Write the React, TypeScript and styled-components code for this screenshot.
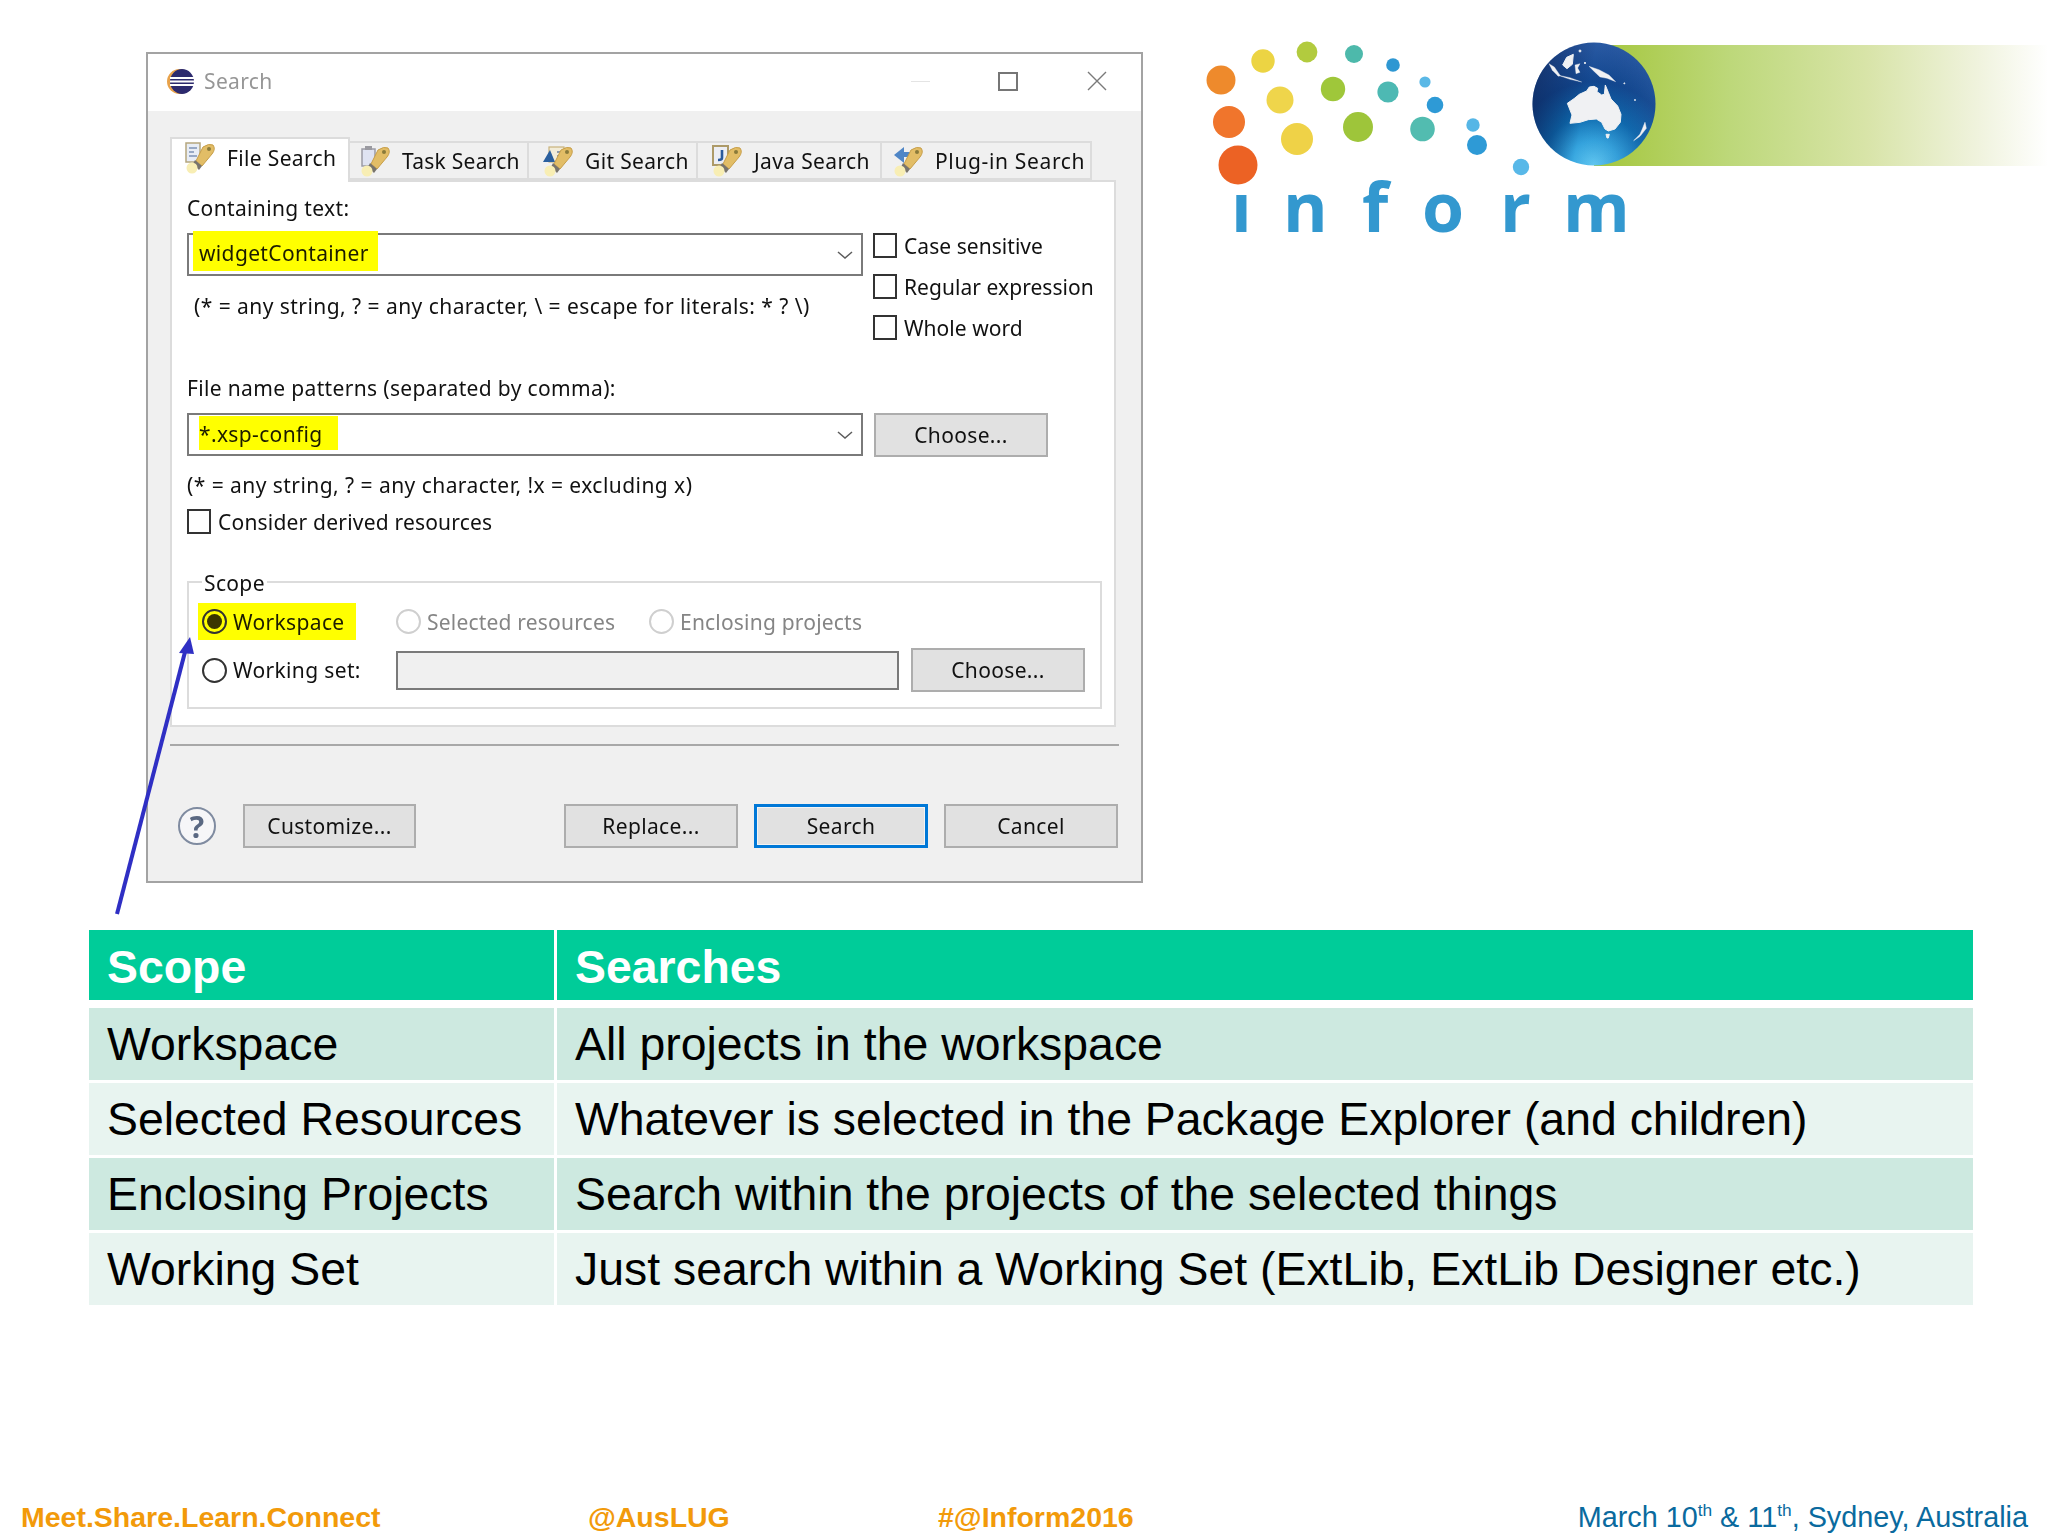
import React from 'react'
import styled, { createGlobalStyle } from 'styled-components'

const GlobalStyle = createGlobalStyle`
	html, body {
		margin: 0;
		padding: 0;
		background: #fff;
	}
	* {
		box-sizing: border-box;
	}
`

type TabKind = 'file' | 'task' | 'git' | 'java' | 'plugin'

const tabs: { label: string; kind: TabKind; width: number; pad: number; spacing: number }[] = [
	{ label: 'File Search', kind: 'file', width: 180, pad: 12, spacing: 0.35 },
	{ label: 'Task Search', kind: 'task', width: 179, pad: 9, spacing: 0.25 },
	{ label: 'Git Search', kind: 'git', width: 169, pad: 13, spacing: 0.35 },
	{ label: 'Java Search', kind: 'java', width: 184, pad: 13, spacing: 0.35 },
	{ label: 'Plug-in Search', kind: 'plugin', width: 210, pad: 10, spacing: 0.65 },
]

const dots = [
	[1221, 80, 14.5, '#ee8a2c'],
	[1263, 61, 11.7, '#ecd443'],
	[1307, 52, 10.4, '#b2cb3e'],
	[1354, 54, 9, '#4db9ab'],
	[1393, 65, 6.8, '#2e97d2'],
	[1425, 82, 5.6, '#5ab8e6'],
	[1229, 122, 16, '#f0752c'],
	[1280, 100, 13.5, '#efd54b'],
	[1333, 89, 12.2, '#9fc73a'],
	[1388, 92, 10.6, '#4db9b3'],
	[1435, 105, 8.3, '#2e9ad6'],
	[1238, 165, 19.5, '#ec6224'],
	[1297, 139, 16, '#efd247'],
	[1358, 127, 15, '#9ec53a'],
	[1422.5, 129, 12.3, '#52bcb0'],
	[1473, 125, 6.7, '#56b6e6'],
	[1477, 145, 10, '#2e9ad6'],
	[1521, 167, 8.2, '#58b8e8'],
] as const

const rows = [
	['Workspace', 'All projects in the workspace'],
	['Selected Resources', 'Whatever is selected in the Package Explorer (and children)'],
	['Enclosing Projects', 'Search within the projects of the selected things'],
	['Working Set', 'Just search within a Working Set (ExtLib, ExtLib Designer etc.)'],
]

const TabIcon = ({ kind }: { kind: TabKind }) => (
	<TabSvg viewBox="0 0 32 32">
		{kind === 'file' && (
			<>
				<rect x="2" y="1" width="14" height="19" fill="#e8edf5" stroke="#b5a67e" strokeWidth="1.5" />
				<path d="M5 6h8M5 10h5M5 14h8" stroke="#7d93b5" strokeWidth="1.6" />
			</>
		)}
		{kind === 'task' && (
			<>
				<rect x="3" y="4" width="13" height="17" fill="#dfe3f2" stroke="#9a9aa4" strokeWidth="1.5" />
				<rect x="6" y="1" width="7" height="4" fill="#9a9aa0" />
			</>
		)}
		{kind === 'git' && (
			<>
				<rect x="7" y="2" width="15" height="15" fill="#f2ecd8" stroke="#c9b37c" strokeWidth="1.2" />
				<path d="M1 17 L8 5 L13 17 Z" fill="#2a5f9e" />
				<path d="M15 7h5M15 11h5" stroke="#6d7f9a" strokeWidth="1.5" />
			</>
		)}
		{kind === 'java' && (
			<>
				<rect x="2" y="1" width="15" height="19" fill="#eceef4" stroke="#ad9a68" strokeWidth="2" />
				<path d="M11 5 V13 Q11 15 7 15" fill="none" stroke="#2a5a9c" strokeWidth="2.6" />
			</>
		)}
		{kind === 'plugin' && (
			<path d="M2 10 L12 2 V7 H18 V12 H12 V18 Z" fill="#4f86c6" />
		)}
		<path d="M19 5 Q25 1 29 3 Q32 7 28 12 L18 24 L12 19 Z" fill="#e2bd66" stroke="#c79e48" strokeWidth="1" />
		<circle cx="25" cy="7" r="2" fill="#8a7a3a" />
		<path d="M11 18 L18 24 L15 28 L9 22 Z" fill="#77736c" />
		<circle cx="8" cy="26" r="5.5" fill="#f8eeb4" />
	</TabSvg>
)

const EclipseIcon = () => (
	<EclipseSvg viewBox="0 0 27 25">
		<ellipse cx="12.5" cy="12.5" rx="12.5" ry="12.5" fill="#e8a24a" />
		<ellipse cx="15" cy="12.5" rx="12" ry="12.5" fill="#2c2a6e" />
		<path d="M3 9h24M3 12.5h24M3 16h24" stroke="#fff" strokeWidth="2" />
	</EclipseSvg>
)

const Chevron = () => (
	<ChevronSvg viewBox="0 0 16 8">
		<path d="M1 1 L8 7 L15 1" fill="none" stroke="#5c5c5c" strokeWidth="1.5" />
	</ChevronSvg>
)

const Logo = () => (
	<LogoSvg viewBox="1178 20 870 230">
		<defs>
			<linearGradient id="trail" x1="0" x2="1" y1="0" y2="0">
				<stop offset="0" stopColor="#a4c63c" />
				<stop offset="0.3" stopColor="#bdd87a" />
				<stop offset="0.6" stopColor="#d8e4a8" />
				<stop offset="0.85" stopColor="#f0f3de" />
				<stop offset="1" stopColor="#ffffff" />
			</linearGradient>
			<radialGradient id="ocean" cx="0.5" cy="1" r="1">
				<stop offset="0" stopColor="#62caf4" />
				<stop offset="0.2" stopColor="#35a4de" />
				<stop offset="0.42" stopColor="#0d68ad" />
				<stop offset="0.68" stopColor="#12478f" />
				<stop offset="1" stopColor="#2a5aa4" />
			</radialGradient>
			<linearGradient id="shade" x1="0" x2="1" y1="0.3" y2="0.5">
				<stop offset="0" stopColor="#0a1f50" stopOpacity="0.6" />
				<stop offset="0.45" stopColor="#0a1f50" stopOpacity="0" />
				<stop offset="1" stopColor="#5a84c4" stopOpacity="0.1" />
			</linearGradient>
		</defs>
		<rect x="1594" y="45" width="454" height="121" fill="url(#trail)" />
		{dots.map(([cx, cy, r, fill]) => (
			<circle key={`${cx}-${cy}`} cx={cx} cy={cy} r={r} fill={fill} />
		))}
		<circle cx="1594" cy="104" r="61.5" fill="url(#ocean)" />
		<circle cx="1594" cy="104" r="61.5" fill="url(#shade)" />
		<g
			transform="translate(1525 35) scale(0.3333)"
			fill="#f0f1f3"
			stroke="#f0f1f3"
			strokeWidth="3"
			strokeLinejoin="round"
		>
			<path d="M127 205 Q150 190 163 178 L185 168 L193 156 L207 154 L218 160 L216 170 L230 180 L238 178 L241 150 L250 172 L258 192 L278 213 L288 238 L286 262 L270 282 L250 288 L240 282 L230 262 L214 252 L190 254 L165 262 L135 265 L141 240 Z" />
			<path d="M243 298 L253 298 L250 309 L246 309 Z" />
			<path d="M326 317 L345 298 L352 282 L360 262 L364 280 L345 304 Z" strokeWidth="1.5" />
			<path d="M113 90 L125 67 L145 58 L142 88 L126 101 Z" />
			<path d="M72 86 L88 96 L106 122 L100 124 L82 106 Z" strokeWidth="1" />
			<path d="M97 120 L135 128 L170 141 L135 133 Z" strokeWidth="1" />
			<path d="M150 90 L165 86 L158 99 L165 112 L153 116 Z" strokeWidth="1" />
			<path d="M192 94 L222 104 L252 120 L272 140 L246 130 L225 126 L206 108 Z" strokeWidth="1" />
			<circle cx="165" cy="48" r="3" />
			<circle cx="180" cy="84" r="2" />
			<circle cx="298" cy="145" r="1.5" />
			<circle cx="330" cy="195" r="1.5" />
		</g>
		<LogoWord x="1231 1283 1362 1422 1500 1563" y="232">
			ınform
		</LogoWord>
	</LogoSvg>
)

const App = () => (
	<Page>
		<GlobalStyle />
		<TopRow>
			<Dialog>
				<TitleBar>
					<EclipseIcon />
					<TitleText>Search</TitleText>
					<WindowControls>
						<MinimizeMark />
						<MaximizeMark />
						<svg width="20" height="20" viewBox="0 0 20 20">
							<path d="M1 1 L19 19 M19 1 L1 19" stroke="#7a7a7a" strokeWidth="1.4" />
						</svg>
					</WindowControls>
				</TitleBar>
				<DialogBody>
					<TabStrip>
						{tabs.map((tab, i) => (
							<Tab
								key={tab.kind}
								$active={i === 0}
								$width={tab.width}
								$pad={tab.pad}
								$spacing={tab.spacing}
							>
								<TabIcon kind={tab.kind} />
								{tab.label}
							</Tab>
						))}
					</TabStrip>
					<Panel>
						<FieldLabel>Containing text:</FieldLabel>
						<TextRow>
							<TextColumn>
								<Combo>
									<ComboMark $left={4} $padLeft={6} $padRight={9} $padTop={4} $height={40} $lift={7}>
										widgetContainer
									</ComboMark>
									<Chevron />
								</Combo>
								<Hint $indent={7} $top={16}>
									(* = any string, ? = any character, \ = escape for literals: * ? \)
								</Hint>
							</TextColumn>
							<Options>
								<OptionRow>
									<CheckBox />
									Case sensitive
								</OptionRow>
								<OptionRow>
									<CheckBox />
									Regular expression
								</OptionRow>
								<OptionRow>
									<CheckBox />
									Whole word
								</OptionRow>
							</Options>
						</TextRow>
						<FieldLabel $top={34}>File name patterns (separated by comma):</FieldLabel>
						<PatternRow>
							<Combo>
								<ComboMark $left={10} $padLeft={0} $padRight={15} $padTop={1} $height={34} $lift={3}>
									*.xsp-config
								</ComboMark>
								<Chevron />
							</Combo>
							<DialogButton $width={174}>Choose...</DialogButton>
						</PatternRow>
						<Hint $indent={0} $top={14}>
							(* = any string, ? = any character, !x = excluding x)
						</Hint>
						<DerivedRow>
							<CheckBox />
							Consider derived resources
						</DerivedRow>
						<ScopeGroup>
							<ScopeLabel>Scope</ScopeLabel>
							<ScopeRow>
								<ScopeCell $width={194}>
									<WorkspaceMark>
										<Radio $checked />
										Workspace
									</WorkspaceMark>
								</ScopeCell>
								<ScopeCell $width={253} $muted>
									<Radio $disabled />
									Selected resources
								</ScopeCell>
								<ScopeCell $muted>
									<Radio $disabled />
									Enclosing projects
								</ScopeCell>
							</ScopeRow>
							<ScopeRow $top={8}>
								<ScopeCell $width={194}>
									<Radio />
									Working set:
								</ScopeCell>
								<WorkingSetInput />
								<DialogButton $width={174}>Choose...</DialogButton>
							</ScopeRow>
						</ScopeGroup>
					</Panel>
					<Separator />
					<ButtonRow>
						<HelpIcon>?</HelpIcon>
						<DialogButton $width={173}>Customize...</DialogButton>
						<ButtonSpacer />
						<DialogButton $width={174}>Replace...</DialogButton>
						<DialogButton $width={174} $primary>
							Search
						</DialogButton>
						<DialogButton $width={174}>Cancel</DialogButton>
					</ButtonRow>
				</DialogBody>
			</Dialog>
			<Logo />
		</TopRow>
		<Arrow viewBox="0 0 110 290">
			<path d="M17 284 L85 22" stroke="#2f2fc4" strokeWidth="4" fill="none" />
			<path d="M90 7 L79 23 L94 24 Z" fill="#2f2fc4" />
		</Arrow>
		<ScopeTable>
			<HeaderRow>
				<HeaderCell>Scope</HeaderCell>
				<HeaderCell>Searches</HeaderCell>
			</HeaderRow>
			{rows.map(([scope, searches], i) => (
				<BodyRow key={scope}>
					<BodyCell $odd={i % 2 === 0}>{scope}</BodyCell>
					<BodyCell $odd={i % 2 === 0}>{searches}</BodyCell>
				</BodyRow>
			))}
		</ScopeTable>
		<Footer>
			<FooterTag>Meet.Share.Learn.Connect</FooterTag>
			<FooterTag>@AusLUG</FooterTag>
			<FooterTag>#@Inform2016</FooterTag>
			<FooterDate>
				March 10<sup>th</sup> &amp; 11<sup>th</sup>, Sydney, Australia
			</FooterDate>
		</Footer>
	</Page>
)

export default App

const Page = styled.div`
	position: relative;
	display: flex;
	flex-direction: column;
	width: 2048px;
	height: 1536px;
	overflow: hidden;
	background: #fff;
	font-family: 'Liberation Sans', Arial, sans-serif;
`

const TopRow = styled.div`
	display: flex;
	align-items: flex-start;
	padding: 20px 0 0 146px;
`

const Dialog = styled.div`
	display: flex;
	flex-direction: column;
	flex: none;
	width: 997px;
	height: 831px;
	margin-top: 32px;
	border: 2px solid #a3a3a3;
	background: #f0f0f0;
	color: #111;
	font-family: 'Noto Sans', sans-serif;
	font-size: 21px;
	letter-spacing: 0.35px;
	filter: blur(0.4px);
`

const TitleBar = styled.div`
	display: flex;
	align-items: center;
	flex: none;
	height: 57px;
	padding: 0 34px 3px 19px;
	background: #fff;
`

const EclipseSvg = styled.svg`
	width: 27px;
	height: 25px;
	margin-right: 10px;
`

const TitleText = styled.span`
	color: #969696;
	font-size: 21px;
`

const WindowControls = styled.div`
	display: flex;
	align-items: center;
	margin-left: auto;
`

const MinimizeMark = styled.span`
	width: 19px;
	height: 1px;
	margin-right: 68px;
	background: #e4e4e4;
`

const MaximizeMark = styled.span`
	width: 20px;
	height: 19px;
	margin-right: 69px;
	border: 2px solid #767676;
`

const DialogBody = styled.div`
	display: flex;
	flex-direction: column;
	flex: 1;
	padding: 26px 25px 0 22px;
`

const TabStrip = styled.div`
	display: flex;
	align-items: flex-end;
	height: 43px;
`

const Tab = styled.div<{ $active?: boolean; $width: number; $pad: number; $spacing: number }>`
	display: flex;
	align-items: center;
	gap: 11px;
	flex: none;
	width: ${p => p.$width}px;
	height: ${p => (p.$active ? 45 : 39)}px;
	margin-bottom: ${p => (p.$active ? -2 : 0)}px;
	padding: 0 0 ${p => (p.$active ? 6 : 0)}px ${p => p.$pad}px;
	border: 2px solid #dcdcdc;
	border-left-width: ${p => (p.$active ? 2 : 0)}px;
	border-bottom-width: ${p => (p.$active ? 0 : 2)}px;
	background: ${p => (p.$active ? '#fff' : '#f0f0f0')};
	position: relative;
	z-index: ${p => (p.$active ? 1 : 0)};
	letter-spacing: ${p => p.$spacing}px;
	white-space: nowrap;
`

const TabSvg = styled.svg`
	flex: none;
	width: 32px;
	height: 32px;
`

const Panel = styled.div`
	flex: none;
	height: 547px;
	padding: 12px 12px 0 15px;
	border: 2px solid #dcdcdc;
	background: #fff;
`

const FieldLabel = styled.div<{ $top?: number }>`
	margin-top: ${p => p.$top ?? 0}px;
	line-height: 28px;
	white-space: nowrap;
`

const TextRow = styled.div`
	display: flex;
	gap: 10px;
	margin-top: 11px;
`

const TextColumn = styled.div`
	flex: none;
	width: 676px;
`

const Combo = styled.div`
	display: flex;
	align-items: center;
	flex: none;
	width: 676px;
	height: 43px;
	padding-right: 8px;
	border: 2px solid #7a7a7a;
	background: #fff;
`

const ComboMark = styled.span<{
	$left: number
	$padLeft: number
	$padRight: number
	$padTop: number
	$height: number
	$lift: number
}>`
	display: flex;
	align-items: center;
	height: ${p => p.$height}px;
	margin: 0 0 ${p => p.$lift}px ${p => p.$left}px;
	padding: ${p => p.$padTop}px ${p => p.$padRight}px 0 ${p => p.$padLeft}px;
	background: #ffff00;
	color: #1c1c00;
`

const ChevronSvg = styled.svg`
	width: 16px;
	height: 8px;
	margin-left: auto;
`

const Hint = styled.div<{ $indent: number; $top: number }>`
	margin-top: ${p => p.$top}px;
	padding-left: ${p => p.$indent}px;
	line-height: 28px;
	letter-spacing: 0.45px;
	white-space: nowrap;
`

const Options = styled.div`
	display: flex;
	flex-direction: column;
	gap: 16px;
`

const OptionRow = styled.label`
	display: flex;
	align-items: center;
	gap: 7px;
	height: 25px;
	letter-spacing: 0.05px;
	white-space: nowrap;
`

const CheckBox = styled.span`
	flex: none;
	width: 24px;
	height: 25px;
	border: 2px solid #333;
	background: #fff;
`

const PatternRow = styled.div`
	display: flex;
	gap: 11px;
	margin-top: 11px;
`

const DerivedRow = styled(OptionRow)`
	margin-top: 10px;
	letter-spacing: 0.2px;
`

const DialogButton = styled.div<{ $width: number; $primary?: boolean }>`
	display: flex;
	align-items: center;
	justify-content: center;
	flex: none;
	width: ${p => p.$width}px;
	height: 44px;
	border: ${p => (p.$primary ? '3px solid #0078d7' : '2px solid #adadad')};
	background: #e1e1e1;
	box-shadow: ${p => (p.$primary ? 'inset 0 0 0 1px #f4f4f4' : 'none')};
	color: #111;
	white-space: nowrap;
`

const ScopeGroup = styled.div`
	position: relative;
	width: 915px;
	height: 128px;
	margin-top: 47px;
	padding: 20px 0 0 13px;
	border: 2px solid #dcdcdc;
`

const ScopeLabel = styled.span`
	position: absolute;
	top: -14px;
	left: 13px;
	padding: 0 2px;
	background: #fff;
	line-height: 28px;
`

const ScopeRow = styled.div<{ $top?: number }>`
	display: flex;
	align-items: center;
	margin-top: ${p => p.$top ?? 0}px;
	min-height: 26px;
`

const ScopeCell = styled.div<{ $width?: number; $muted?: boolean }>`
	display: flex;
	align-items: center;
	gap: 6px;
	flex: none;
	width: ${p => (p.$width ? `${p.$width}px` : 'auto')};
	color: ${p => (p.$muted ? '#858585' : '#111')};
	letter-spacing: ${p => (p.$muted ? 0.2 : 0.35)}px;
	white-space: nowrap;
`

const WorkspaceMark = styled.span`
	display: flex;
	align-items: center;
	gap: 6px;
	height: 37px;
	margin: 0 0 0 -4px;
	padding: 0 11px 0 4px;
	background: #ffff00;
	color: #1c1c00;
`

const Radio = styled.span<{ $checked?: boolean; $disabled?: boolean }>`
	display: flex;
	align-items: center;
	justify-content: center;
	flex: none;
	width: 25px;
	height: 25px;
	border: 2px solid ${p => (p.$disabled ? '#cfcfcf' : '#333')};
	border-radius: 50%;
	background: ${p => (p.$checked ? 'transparent' : '#fff')};
	&::after {
		content: '';
		display: ${p => (p.$checked ? 'block' : 'none')};
		width: 15px;
		height: 15px;
		border-radius: 50%;
		background: #3a3600;
	}
`

const WorkingSetInput = styled.div`
	flex: none;
	width: 503px;
	height: 39px;
	margin-right: 12px;
	border: 2px solid #7a7a7a;
	background: #f0f0f0;
`

const Separator = styled.div`
	flex: none;
	height: 2px;
	margin: 17px 0 0 0;
	background: #a8a8a8;
	width: 949px;
`

const ButtonRow = styled.div`
	display: flex;
	align-items: center;
	gap: 16px;
	width: 948px;
	margin-top: 58px;
	padding-left: 8px;
`

const HelpIcon = styled.div`
	display: flex;
	align-items: center;
	justify-content: center;
	flex: none;
	width: 38px;
	height: 38px;
	margin-right: 11px;
	border: 2px solid #7f8ba0;
	border-radius: 50%;
	background: #f6f6f8;
	color: #5a6882;
	font-size: 30px;
	font-weight: 700;
`

const ButtonSpacer = styled.div`
	flex: 1;
`

const LogoSvg = styled.svg`
	flex: none;
	width: 870px;
	height: 230px;
	margin-left: 35px;
`

const LogoWord = styled.text`
	fill: #3398cf;
	font-family: 'Open Sans', sans-serif;
	font-size: 68px;
	font-weight: 700;
`

const Arrow = styled.svg`
	position: absolute;
	top: 630px;
	left: 100px;
	width: 110px;
	height: 290px;
`

const ScopeTable = styled.div`
	display: flex;
	flex-direction: column;
	gap: 3.5px;
	width: 1884px;
	margin: 47px 0 0 89px;
	font-size: 46.4px;
`

const HeaderRow = styled.div`
	display: grid;
	grid-template-columns: 465px 1fr;
	column-gap: 3px;
	height: 70px;
	margin-bottom: 4.5px;
`

const BodyRow = styled.div`
	display: grid;
	grid-template-columns: 465px 1fr;
	column-gap: 3px;
	height: 71.5px;
`

const HeaderCell = styled.div`
	display: flex;
	align-items: center;
	padding: 3px 0 0 18px;
	background: #00cc99;
	color: #fff;
	font-weight: 700;
`

const BodyCell = styled.div<{ $odd: boolean }>`
	display: flex;
	align-items: center;
	padding-left: 18px;
	background: ${p => (p.$odd ? '#cde9e0' : '#e8f4f0')};
	color: #000;
	white-space: nowrap;
`

const Footer = styled.div`
	display: grid;
	grid-template-columns: 567px 350px 1fr auto;
	align-items: center;
	height: 42px;
	margin-top: auto;
	padding: 4px 20px 0 21px;
	font-size: 28.5px;
`

const FooterTag = styled.span`
	color: #f29a0a;
	font-weight: 700;
	white-space: nowrap;
`

const FooterDate = styled.span`
	color: #0a6a9e;
	font-size: 28.8px;
	white-space: nowrap;
	sup {
		font-size: 60%;
		line-height: 0;
	}
`
